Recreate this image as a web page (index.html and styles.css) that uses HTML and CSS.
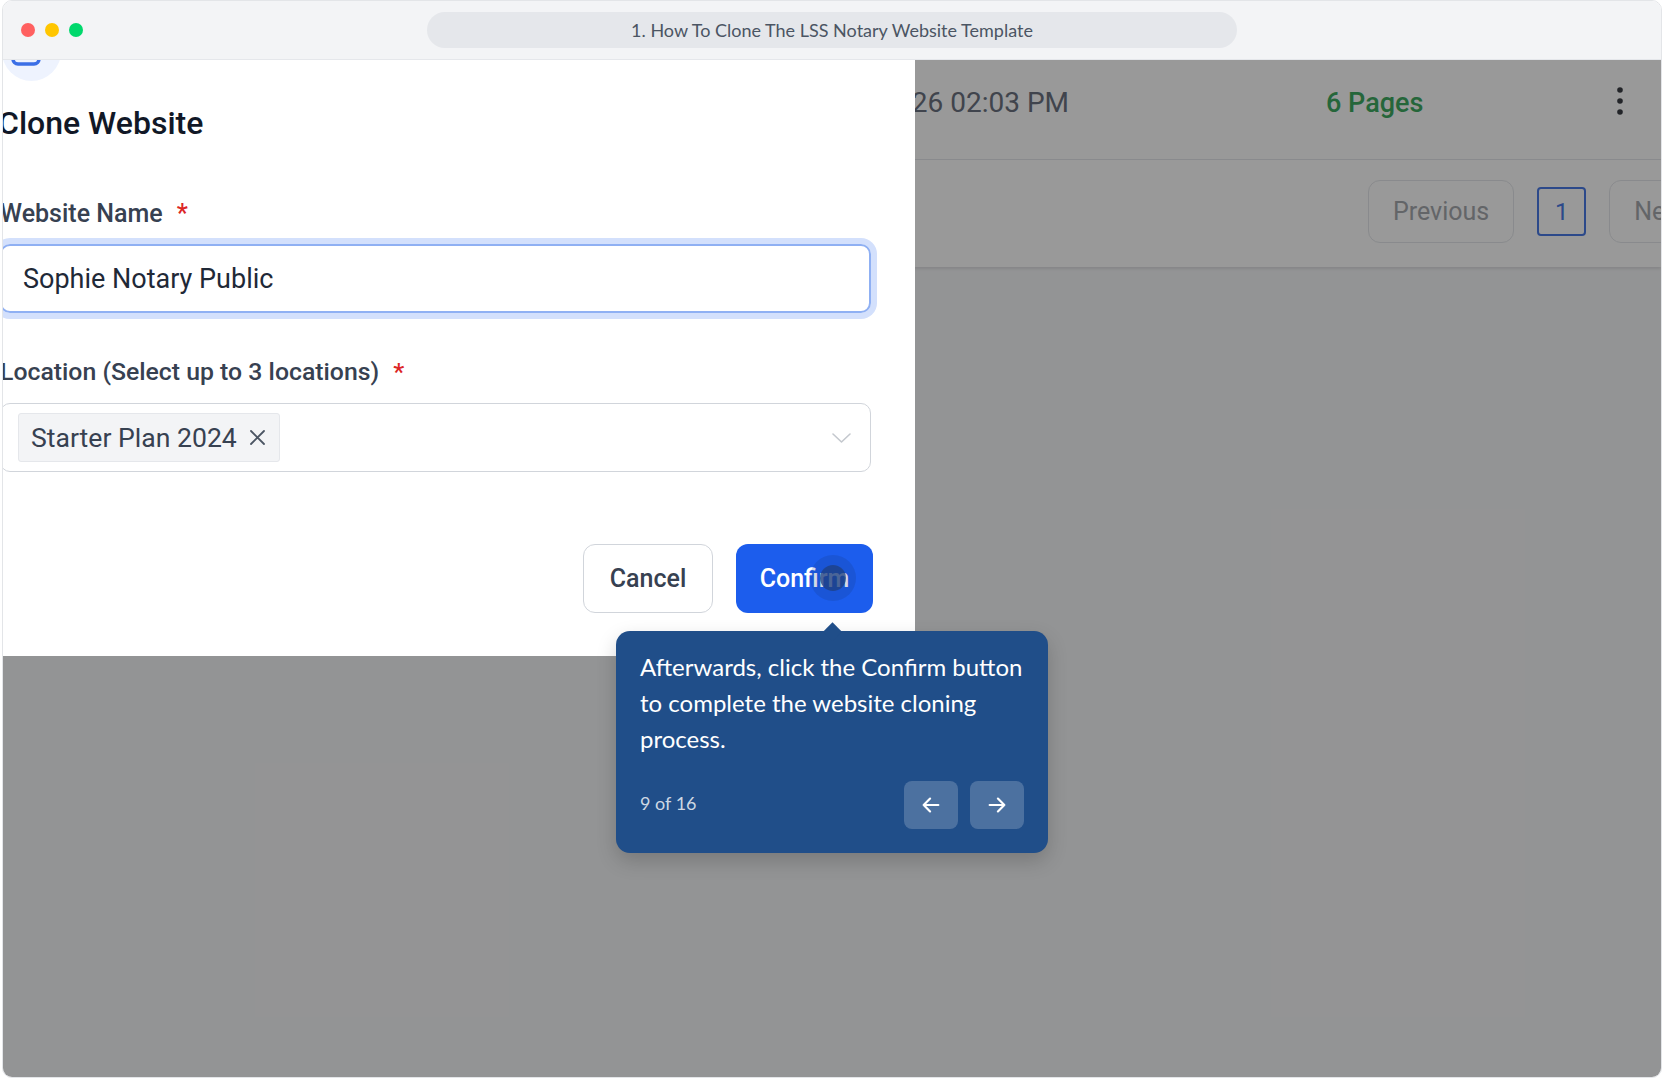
FILE: index.html
```html
<!DOCTYPE html>
<html lang="en">
  <head>
    <meta charset="UTF-8" />
    <meta name="viewport" content="width=device-width, initial-scale=1.0" />
    <title>Clone Website</title>
    <link rel="stylesheet" href="styles.css">
  </head>
  <body>
    <div class="window">
      <div class="titlebar">
        <div class="lights">
          <span class="light red"></span>
          <span class="light yellow"></span>
          <span class="light green"></span>
        </div>
        <div class="address">1. How To Clone The LSS Notary Website Template</div>
        <div></div>
      </div>

      <div class="viewport">
        <!-- page underneath the modal -->
        <div class="page">
          <div class="card">
            <div class="card-head">
              <span class="updated">Feb 26 02:03 PM</span>
              <span class="pages">6 Pages</span>
              <span class="kebab">
                <svg width="6" height="28" viewBox="0 0 6 28">
                  <circle cx="3" cy="3" r="2.8" fill="#3a3d44" />
                  <circle cx="3" cy="14" r="2.8" fill="#3a3d44" />
                  <circle cx="3" cy="25" r="2.8" fill="#3a3d44" />
                </svg>
              </span>
            </div>
            <div class="pager">
              <button class="page-btn">Previous</button>
              <button class="page-num">1</button>
              <button class="page-btn">Next</button>
            </div>
          </div>
        </div>

        <div class="backdrop"></div>

        <div class="dialog">
          <div class="dialog-col">
            <div class="badge">
              <svg width="59" height="59" viewBox="0 0 59 59">
                <rect x="18" y="10" width="24" height="22" rx="5" fill="none" stroke="#3b6fe6" stroke-width="3.5" />
                <rect x="11" y="18" width="26" height="24" rx="5" fill="#eef3fe" stroke="#3b6fe6" stroke-width="3.5" />
              </svg>
            </div>
            <h2 class="title">Clone Website</h2>

            <div class="field-label">Website Name <span class="req">*</span></div>
            <div class="input">Sophie Notary Public</div>

            <div class="field-label second">Location (Select up to 3 locations) <span class="req">*</span></div>
            <div class="select">
              <span class="tag">
                Starter Plan 2024
                <svg width="17" height="17" viewBox="0 0 17 17">
                  <path d="M2 2L15 15M15 2L2 15" stroke="#4b5563" stroke-width="1.8" stroke-linecap="round" />
                </svg>
              </span>
              <svg class="chevron" width="19" height="10" viewBox="0 0 19 10">
                <path d="M1 1L9.5 9L18 1" fill="none" stroke="#c4c8ce" stroke-width="1.6" stroke-linecap="round" stroke-linejoin="round" />
              </svg>
            </div>

            <div class="actions">
              <button class="btn btn-cancel">Cancel</button>
              <button class="btn btn-confirm">Confirm<span class="ripple"></span></button>
            </div>
          </div>
        </div>

        <div class="tour">
          <p class="tour-text">Afterwards, click the Confirm button to complete the website cloning process.</p>
          <div class="tour-foot">
            <span class="tour-count">9 of 16</span>
            <div class="tour-nav">
              <button class="tour-btn">
                <svg width="22" height="22" viewBox="0 0 24 24">
                  <path d="M20 12H4M11 5L4 12L11 19" fill="none" stroke="#fff" stroke-width="2.4" stroke-linecap="round" stroke-linejoin="round" />
                </svg>
              </button>
              <button class="tour-btn">
                <svg width="22" height="22" viewBox="0 0 24 24">
                  <path d="M4 12H20M13 5L20 12L13 19" fill="none" stroke="#fff" stroke-width="2.4" stroke-linecap="round" stroke-linejoin="round" />
                </svg>
              </button>
            </div>
          </div>
        </div>
      </div>
    </div>
  </body>
</html>
```

FILE: styles.css
```css
body {
  margin: 0;
  padding: 0 0 0 2px;
  background: #ffffff;
  font-family: Roboto, "Liberation Sans", sans-serif;
}

button {
  font: inherit;
  cursor: pointer;
}

.window {
  width: 1660px;
  height: 1078px;
  box-sizing: border-box;
  border: 1px solid #e3e5e8;
  border-radius: 10px;
  overflow: hidden;
  display: flex;
  flex-direction: column;
}

/* browser chrome */
.titlebar {
  flex: none;
  height: 59px;
  box-sizing: border-box;
  border-bottom: 1px solid #e5e7eb;
  background: #f3f4f6;
  display: grid;
  grid-template-columns: 1fr 810px 1fr;
  align-items: center;
}
.lights {
  display: flex;
  gap: 10px;
  padding-left: 18px;
}
.light {
  width: 14px;
  height: 14px;
  border-radius: 50%;
}
.red {
  background: #ff6060;
}
.yellow {
  background: #ffc600;
}
.green {
  background: #00d86c;
}
.address {
  height: 36px;
  border-radius: 18px;
  background: #e5e7eb;
  display: flex;
  align-items: center;
  justify-content: center;
  font-family: Lato, "Open Sans", sans-serif;
  font-size: 18px;
  color: #4b5563;
}

.viewport {
  position: relative;
  flex: 1;
  overflow: hidden;
}

/* page behind the modal */
.page {
  height: 100%;
  background: #f6f7f9;
}
.card {
  background: #ffffff;
  box-shadow: 0 2px 3px rgba(0, 0, 0, 0.1);
}
.card-head {
  height: 100px;
  box-sizing: border-box;
  border-bottom: 1px solid #e5e7eb;
  padding-top: 23px;
  display: flex;
  align-items: flex-start;
  font-size: 28px;
  line-height: 40px;
  white-space: nowrap;
}
.updated {
  width: 1066px;
  flex: none;
  text-align: right;
  color: #6b7280;
}
.pages {
  margin-left: 257px;
  font-size: 27px;
  font-weight: 500;
  color: #3fab62;
}
.kebab {
  margin-left: auto;
  margin-right: 38px;
  padding-top: 3px;
}
.pager {
  height: 107px;
  box-sizing: border-box;
  padding: 4px 0 8px 1365px;
  display: flex;
  align-items: center;
  gap: 23px;
}
.page-btn {
  flex: none;
  height: 63px;
  padding: 0 24px;
  border: 1px solid #e5e7eb;
  border-radius: 12px;
  background: #ffffff;
  font-size: 25px;
  color: #a5a8ad;
}
.page-num {
  flex: none;
  width: 49px;
  height: 49px;
  padding: 0;
  border: 2px solid #4a7be6;
  border-radius: 4px;
  background: #ffffff;
  font-size: 24px;
  color: #4a7be6;
}

.backdrop {
  position: absolute;
  inset: 0;
  background: rgba(0, 0, 0, 0.4);
}

/* modal */
.dialog {
  position: absolute;
  top: 0;
  left: 0;
  width: 912px;
  box-sizing: border-box;
  padding: 0 44px 43px 0;
  background: #ffffff;
  overflow: hidden;
}
.dialog-col {
  margin-left: -3px;
}
.badge {
  width: 59px;
  height: 59px;
  margin: -38px 0 0 2px;
  border-radius: 50%;
  background: #eef3fe;
}
.title {
  margin: 22px 0 0 -2px;
  font-size: 32px;
  line-height: 40px;
  font-weight: 500;
  color: #111827;
}
.field-label {
  margin-top: 57px;
  font-size: 25px;
  line-height: 28px;
  font-weight: 500;
  color: #374151;
}
.field-label.second {
  margin-top: 45px;
  font-size: 24.8px;
}
.req {
  margin-left: 8px;
  color: #dc2626;
}
.input {
  margin-top: 16px;
  height: 69px;
  box-sizing: border-box;
  padding: 0 21px;
  border: 2px solid #8fb0f3;
  border-radius: 10px;
  box-shadow: 0 0 0 6px #d3e0fc;
  display: flex;
  align-items: center;
  font-size: 27px;
  color: #1f2937;
}
.select {
  margin-top: 17px;
  height: 69px;
  box-sizing: border-box;
  padding: 0 19px 0 17px;
  border: 1.5px solid #d1d5db;
  border-radius: 10px;
  display: flex;
  align-items: center;
  justify-content: space-between;
}
.tag {
  height: 49px;
  box-sizing: border-box;
  padding: 0 13px 0 12px;
  display: flex;
  align-items: center;
  gap: 12px;
  background: #f3f4f6;
  border: 1px solid #e5e7eb;
  border-radius: 3px;
  font-size: 26.6px;
  color: #374151;
}
.actions {
  margin: 72px -2px 0 0;
  display: flex;
  justify-content: flex-end;
  gap: 23px;
}
.btn {
  height: 69px;
  padding: 0;
  border-radius: 12px;
  font-size: 25px;
  font-weight: 500;
}
.btn-cancel {
  width: 130px;
  background: #ffffff;
  border: 1.5px solid #d1d5db;
  color: #374151;
}
.btn-confirm {
  position: relative;
  width: 137px;
  background: #1c5ded;
  border: 0;
  color: #ffffff;
}
.ripple {
  position: absolute;
  left: 84px;
  top: 21px;
  width: 26px;
  height: 26px;
  border-radius: 50%;
  background: rgba(30, 62, 125, 0.8);
  box-shadow: 0 0 0 10px rgba(20, 50, 110, 0.18);
}

/* guided tour popover */
.tour {
  position: absolute;
  left: 613px;
  top: 571px;
  width: 432px;
  box-sizing: border-box;
  padding: 18px 18px 24px 24px;
  background: #204e89;
  border-radius: 14px;
  box-shadow: 0 8px 20px rgba(0, 0, 0, 0.18);
  font-family: Lato, "Open Sans", sans-serif;
  color: #ffffff;
}
.tour::before {
  content: "";
  position: absolute;
  left: 210px;
  top: -6px;
  width: 13px;
  height: 13px;
  background: #204e89;
  transform: rotate(45deg);
}
.tour-text {
  margin: 0;
  font-size: 24px;
  line-height: 36px;
}
.tour-foot {
  margin: 24px 6px 0 0;
  display: flex;
  align-items: center;
  justify-content: space-between;
}
.tour-count {
  padding-bottom: 4px;
  font-size: 18px;
  color: rgba(255, 255, 255, 0.78);
}
.tour-nav {
  display: flex;
  gap: 12px;
}
.tour-btn {
  width: 54px;
  height: 48px;
  padding: 0;
  border: 0;
  border-radius: 8px;
  background: rgba(255, 255, 255, 0.2);
  display: flex;
  align-items: center;
  justify-content: center;
}
```
